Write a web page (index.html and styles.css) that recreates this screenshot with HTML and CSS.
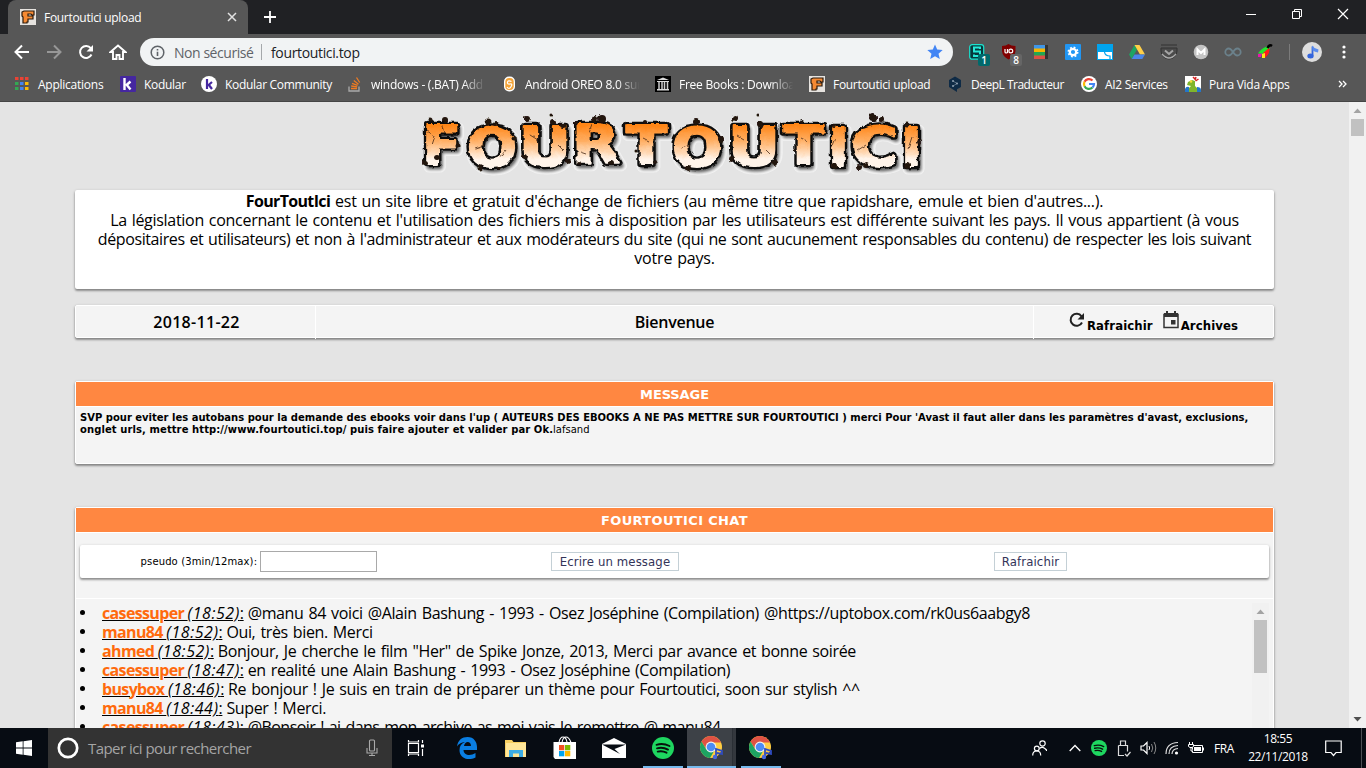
FILE: index.html
```html
<!DOCTYPE html>
<html lang="fr">
<head>
<meta charset="utf-8">
<title>Fourtoutici upload</title>
<link rel="stylesheet" href="styles.css">
</head>
<body>
<svg class="defs" width="0" height="0">
  <defs>
    <symbol id="fav" viewBox="0 0 16 16"><rect width="16" height="16" fill="#e6e3df"/><path d="M2 3l2-1h10v4h-2l-1-1H8v2h5v3H8v3H7v1H3V8L2 7z" fill="#f58a33" stroke="#2b1a0d" stroke-width="1.2"/></symbol>
    <symbol id="spotify" viewBox="0 0 22 22"><circle cx="11" cy="11" r="11" fill="#1ed760"/><path d="M4.500 7.800c4.500-1.300 9-.8 13 1.200M5 11.300c4-1 7.500-.6 11 1.300M5.700 14.600c3.200-.7 6-.4 8.800 1.100" fill="none" stroke="#07120b" stroke-width="1.900" stroke-linecap="round"/></symbol>
    <symbol id="chrome" viewBox="0 0 24 24"><circle cx="11" cy="11" r="11" fill="#ffcd41"/><path d="M1.500 5.500A11 11 0 0 1 20.500 5.500L21 6.500H11L6.500 13.500z" fill="#df5244"/><path d="M1.500 5.500A11 11 0 0 0 10 22l5-8.500L11 15l-5-2z" fill="#1da462"/><circle cx="11" cy="11" r="5.400" fill="#f2f2f2"/><circle cx="11" cy="11" r="4.300" fill="#4c8bf5"/><path d="M16 21v-8l6 2v3l-5-1" fill="none" stroke="#2f4cc0" stroke-width="1.800"/><circle cx="15" cy="21" r="2.200" fill="#4668dc"/></symbol>
  </defs>
</svg>
<div class="window">
  <div class="tabstrip">
    <div class="tab"><svg width="16" height="16"><use href="#fav"/></svg><span class="tab-title">Fourtoutici upload</span>
      <svg class="tab-close" width="10" height="10"><path d="M1 1l8 8M9 1L1 9" stroke="#e2e2e2" stroke-width="1.500"/></svg></div>
    <svg class="new-tab" width="12" height="12"><path d="M6 0v12M0 6h12" stroke="#fff" stroke-width="1.800"/></svg>
    <div class="controls">
      <svg width="12" height="12"><path d="M1 6.500h10" stroke="#fff"/></svg>
      <svg width="12" height="12"><path d="M1.500 3.500h7v7h-7zM3.500 3.500v-2h7v7h-2" fill="none" stroke="#fff"/></svg>
      <svg width="12" height="12"><path d="M1 1l10 10M11 1L1 11" stroke="#fff" stroke-width="1.200"/></svg>
    </div>
  </div>
  <div class="toolbar">
    <div class="nav">
      <svg width="16" height="16"><path d="M15 8H2M8 1.500L1.500 8 8 14.500" fill="none" stroke="#fff" stroke-width="2"/></svg>
      <svg width="16" height="16"><path d="M1 8h13M8 1.500L14.500 8 8 14.500" fill="none" stroke="#979797" stroke-width="2"/></svg>
      <svg width="16" height="16"><path d="M13.500 10.500A6 6 0 1 1 12.800 4.200" fill="none" stroke="#fff" stroke-width="2"/><path d="M15 1v6.500H8.500z" fill="#fff"/></svg>
      <svg width="18" height="16"><path d="M4 8v7h3.500v-4h3v4H14V8h2.500L9 1.500 1.500 8z" fill="none" stroke="#fff" stroke-width="1.900"/></svg>
    </div>
    <div class="omnibox">
      <svg width="15" height="15"><circle cx="7.500" cy="7.500" r="6.300" fill="none" stroke="#5f6368" stroke-width="1.500"/><path d="M7.500 6.700v4.200M7.500 4v1.600" stroke="#5f6368" stroke-width="1.600"/></svg>
      <span class="unsafe">Non sécurisé</span><span class="bar"></span><span class="url">fourtoutici.top</span>
      <svg class="star" width="16" height="16"><path d="M8 .5l2.200 5.100 5.500.5-4.200 3.600 1.300 5.400L8 12.200l-4.800 2.900 1.300-5.400L.3 6.100l5.500-.5z" fill="#4285f4"/></svg>
    </div>
    <div class="exts">
      <div class="ext"><svg width="16" height="16"><rect x=".7" y=".7" width="14" height="14.500" rx="2.500" fill="#07383c" stroke="#19e3cf" stroke-width="1.200"/><path d="M11 5V3.500H5V7.500h6V12H5v-1.500" fill="none" stroke="#25ead9" stroke-width="2"/></svg><b class="count teal">1</b></div>
      <div class="ext"><svg width="16" height="16"><path d="M1 2q4 0 6.500-2Q10 2 14.500 2v5q-.5 5.500-7 8.500Q1.500 12.500 1 7z" fill="#800000"/><path d="M4 5v3q0 1 1.200 1T6.500 8V5v4" fill="none" stroke="#fff" stroke-width="1.200"/><circle cx="9.800" cy="7" r="1.900" fill="none" stroke="#fff" stroke-width="1.200"/></svg><b class="count grey">8</b></div>
      <svg width="16" height="16"><path d="M11 1h4v14h-4z" fill="#333"/><path d="M1 1h11v4H1z" fill="#3e96e8"/><path d="M1 4.500h11v4H1z" fill="#f6b400"/><path d="M1 8h11v4H1z" fill="#22a852"/><path d="M1 11.500h11v3.500H1z" fill="#dc5145"/></svg>
      <svg width="16" height="16"><rect width="16" height="16" rx="1" fill="#2196f3"/><circle cx="8" cy="8" r="3.200" fill="none" stroke="#fff" stroke-width="2.200"/><circle cx="8" cy="8" r="4.700" fill="none" stroke="#fff" stroke-width="1.600" stroke-dasharray="1.850 1.850"/></svg>
      <svg width="16" height="16"><rect width="16" height="16" fill="#00a4ef"/><path d="M1 8h14v7H1z" fill="#fff"/><path d="M7.500 8q.5 4 5.500 4v3" fill="none" stroke="#00a4ef" stroke-width="1.200"/></svg>
      <svg width="16" height="16"><path d="M5.500 1L0 10.500 2.700 15 8 5.500z" fill="#1da462"/><path d="M5.500 1h5L16 10.500h-5z" fill="#ffcf48"/><path d="M5.500 10.500H16L13.300 15H2.700z" fill="#4b86e8"/></svg>
      <svg width="18" height="16"><path d="M1 1h16M1 4h16v3a8 8 0 0 1-16 0z" fill="#4b4b4b" stroke="#333"/><path d="M2 10q7 8 14 0" stroke="#aaa" fill="none" stroke-width="1.500"/><path d="M5 6.500L9 10l4-3.500" stroke="#a5a5a5" fill="none" stroke-width="2"/></svg>
      <svg width="16" height="16"><circle cx="8" cy="8" r="7.300" fill="#c4c4c4"/><path d="M4.500 11V5.500L8 9l3.500-3.500V11" fill="none" stroke="#fff" stroke-width="2"/></svg>
      <svg width="18" height="16"><path d="M9 8C7 5 6 4.500 4.800 4.500a3.500 3.500 0 0 0 0 7C6 11.500 7 11 9 8s3-3.500 4.200-3.500a3.500 3.500 0 0 1 0 7C12 11.500 11 11 9 8z" fill="none" stroke="#6b818b" stroke-width="1.800"/></svg>
      <svg width="16" height="16"><path d="M2 8q4-5 10-6l1 2-6 6-6-.5z" fill="#20e52d"/><path d="M6 9l6-5q2 4-4 10z" fill="#ff1b1b"/><path d="M1 10l4-.5L4 13H1z" fill="#e815b0"/><path d="M5 10l3-1v5H5z" fill="#ffe617"/><path d="M10.500 4q2-4 4.500-2" stroke="#000" stroke-width="2.500" fill="none"/></svg>
    </div>
    <span class="tool-sep"></span>
    <svg class="avatar" width="20" height="20"><circle cx="10" cy="10" r="10" fill="#dedede"/><path d="M10.500 4.500v9" stroke="#3465dc" stroke-width="1.800"/><path d="M10 3.500q2 3 6.500 4l-.5 3q-3-.5-5.500-2z" fill="#5b8dee"/><ellipse cx="8.500" cy="14" rx="3.200" ry="2.500" fill="#3465dc"/></svg>
    <svg class="dots" width="4" height="16"><circle cx="2" cy="3" r="1.600" fill="#fff"/><circle cx="2" cy="8" r="1.600" fill="#fff"/><circle cx="2" cy="13" r="1.600" fill="#fff"/></svg>
  </div>
  <div class="bookmarks">
    <div class="bm apps"><svg width="14" height="14"><path d="M0 1.500h14" stroke="#ea4335" stroke-width="3" stroke-dasharray="3.500 1.500"/><path d="M0 6.500h3.500M0 11.500h3.500" stroke="#34a853" stroke-width="3"/><path d="M5 6.500h3.500M5 11.500h3.500" stroke="#4285f4" stroke-width="3"/><path d="M10 6.500h3.500M10 11.500h3.500" stroke="#fbbc05" stroke-width="3"/></svg><span>Applications</span></div>
    <div class="bm"><svg width="16" height="16"><rect width="16" height="16" rx="1" fill="#4527a0"/><path d="M4.500 2v12M10.500 5.500L6 9.500M6.500 8.500l4 5" stroke="#fff" stroke-width="2.400"/></svg><span>Kodular</span></div>
    <div class="bm"><svg width="16" height="16"><circle cx="8" cy="8" r="8" fill="#fff"/><path d="M6 3v10M11 6L7 9.500M7.500 8.500l3.500 4.500" stroke="#4527a0" stroke-width="2.200"/></svg><span>Kodular Community</span></div>
    <div class="bm"><svg width="16" height="16"><path d="M2 10.500v4.500h10v-4.500" fill="none" stroke="#aaa" stroke-width="1.300"/><path d="M4 12.500h6M4.200 10l6 .8M5 7.300l5.600 2M6.800 4.500l4.700 3.700M9.500 1.500l3.200 5" stroke="#ef7b22" stroke-width="1.300"/></svg><span class="fade">windows - (.BAT) Add</span></div>
    <div class="bm"><svg width="16" height="16"><rect x="3" y=".5" width="11" height="15" rx="5" fill="#fff"/><rect x="4.300" y="2" width="8.400" height="12" rx="3.800" fill="#f4a438"/><path d="M10.500 5.500Q7 4 6.500 6.200T9 8t1 2.800-4 .2" stroke="#fff" stroke-width="1.200" fill="none"/></svg><span class="fade">Android OREO 8.0 sur</span></div>
    <div class="bm"><svg width="16" height="16"><rect width="16" height="16" fill="#000"/><path d="M2 4l6-2.500L14 4zM2 5h12v1H2zM2 13h12v1.500H2z" fill="#ddd"/><path d="M4 6v7M7 6v7M9.500 6v7M12.500 6v7" stroke="#ccc" stroke-width="1.500"/></svg><span class="fade">Free Books : Downloa</span></div>
    <div class="bm"><svg width="16" height="16"><use href="#fav"/></svg><span>Fourtoutici upload</span></div>
    <div class="bm"><svg width="16" height="16"><path d="M8 .5l6 3.500v7l-4 2.300V16l-4-2.500L2 11V4z" fill="#0f2b46"/><path d="M6 5l4 2.500L6 10" stroke="#5b7084" fill="none"/><circle cx="6" cy="5" r="1" fill="#8fa0b0"/><circle cx="10" cy="7.500" r="1" fill="#8fa0b0"/><circle cx="6" cy="10" r="1" fill="#8fa0b0"/></svg><span class="deepl">DeepL Traducteur</span></div>
    <div class="bm"><svg width="16" height="16"><circle cx="8" cy="8" r="8" fill="#fff"/><g fill="none" stroke-width="2.200"><path d="M11.500 4.500A5 5 0 0 0 3.500 5.800" stroke="#ea4335"/><path d="M3.500 5.800a5 5 0 0 0 0 4.400" stroke="#fbbc05"/><path d="M3.500 10.200a5 5 0 0 0 8 1.300" stroke="#34a853"/><path d="M11.500 11.500Q13 10 13 8H8" stroke="#4285f4"/></g></svg><span>AI2 Services</span></div>
    <div class="bm"><svg width="16" height="16"><rect width="16" height="16" fill="#fff"/><path d="M3 6l4-2 3 1v5l2 2v4H4v-4l2-2-4-1z" fill="#7fb52c"/><path d="M8 1l2 2M11 1l-1 3M13.500 3l-3 2" stroke="#d32222" stroke-width="1.500"/><path d="M0 13q1-3 4-2v5H0zM12 11q4 0 4 3v2h-4z" fill="#2476c8"/><circle cx="6" cy="5.500" r="1.300" fill="#f8dc37"/></svg><span>Pura Vida Apps</span></div>
    <svg class="more" width="9" height="8"><path d="M1 1l3 3-3 3M5 1l3 3-3 3" fill="none" stroke="#fff" stroke-width="1.300"/></svg>
  </div>
  <div class="viewport">
    <main class="page">
      <svg class="logo" width="520" height="80" viewBox="413 105 520 80">
        <defs>
          <linearGradient id="fire" gradientUnits="userSpaceOnUse" x1="0" y1="121" x2="0" y2="166"><stop offset=".1" stop-color="#ff8618"/><stop offset=".45" stop-color="#ffb066"/><stop offset=".85" stop-color="#fff4ea"/></linearGradient>
          <filter id="rough" x="-5%" y="-20%" width="110%" height="140%"><feTurbulence type="fractalNoise" baseFrequency=".16" numOctaves="2" seed="4" result="n"/><feDisplacementMap in="SourceGraphic" in2="n" scale="4" xChannelSelector="R" yChannelSelector="G"/></filter>
          <filter id="soft" x="-5%" y="-20%" width="110%" height="140%"><feGaussianBlur stdDeviation="1.500"/></filter>
          <g id="word" class="logo-text">
            <text x="422" y="164" textLength="39" lengthAdjust="spacingAndGlyphs">F</text><text x="467" y="166" textLength="50" lengthAdjust="spacingAndGlyphs">O</text><text x="519" y="165" textLength="52" lengthAdjust="spacingAndGlyphs">U</text><text x="572" y="163" textLength="48" lengthAdjust="spacingAndGlyphs">R</text><text x="626" y="164" textLength="41" lengthAdjust="spacingAndGlyphs">T</text><text x="672" y="166" textLength="50" lengthAdjust="spacingAndGlyphs">O</text><text x="728" y="165" textLength="52" lengthAdjust="spacingAndGlyphs">U</text><text x="783" y="164" textLength="41" lengthAdjust="spacingAndGlyphs">T</text><text x="828" y="166" textLength="21" lengthAdjust="spacingAndGlyphs">I</text><text x="851" y="165" textLength="47" lengthAdjust="spacingAndGlyphs">C</text><text x="901" y="166" textLength="21" lengthAdjust="spacingAndGlyphs">I</text>
          </g>
        </defs>
        <g transform="translate(2 3)" stroke="#f4f4f4" fill="#f4f4f4" stroke-width="11" aria-hidden="true"><use href="#word"/></g>
        <g transform="translate(2 3)" stroke="#666" fill="#666" stroke-width="5" filter="url(#soft)" aria-hidden="true"><use href="#word"/></g>
        <g filter="url(#rough)">
          <g stroke="#0c0c0c" fill="#0c0c0c" stroke-width="6.500" aria-hidden="true"><use href="#word"/></g>
          <g stroke="url(#fire)" fill="url(#fire)" stroke-width="2"><use href="#word"/></g>
          <g fill="#21130a"><circle cx="430" cy="120" r="2.500"/><circle cx="445" cy="120" r="3"/><circle cx="425" cy="163" r="3"/><circle cx="437" cy="158" r="3"/><circle cx="458" cy="146" r="2.500"/><circle cx="488" cy="122" r="3.500"/><circle cx="495" cy="124" r="2"/><circle cx="514" cy="139" r="2.500"/><circle cx="480" cy="168" r="2.500"/><circle cx="499" cy="168" r="2"/><circle cx="527" cy="119" r="3"/><circle cx="551" cy="115" r="1.500"/><circle cx="553" cy="122" r="3"/><circle cx="563" cy="126" r="3"/><circle cx="568" cy="161" r="3"/><circle cx="524" cy="157" r="3"/><circle cx="595" cy="119" r="3"/><circle cx="602" cy="119" r="4"/><circle cx="576" cy="123" r="2"/><circle cx="611" cy="163" r="3"/><circle cx="579" cy="163" r="2"/><circle cx="645" cy="122" r="2"/><circle cx="636" cy="151" r="1.500"/><circle cx="655" cy="162" r="2"/><circle cx="696" cy="122" r="3"/><circle cx="721" cy="139" r="3"/><circle cx="688" cy="168" r="3"/><circle cx="735" cy="118" r="3"/><circle cx="758" cy="115" r="1.500"/><circle cx="760" cy="124" r="3"/><circle cx="775" cy="163" r="3"/><circle cx="732" cy="159" r="3"/><circle cx="802" cy="122" r="2"/><circle cx="794" cy="151" r="1.500"/><circle cx="834" cy="126" r="2"/><circle cx="835" cy="166" r="3"/><circle cx="873" cy="118" r="4"/><circle cx="882" cy="119" r="3"/><circle cx="859" cy="167" r="3"/><circle cx="866" cy="165" r="3"/><circle cx="907" cy="125" r="2.500"/><circle cx="919" cy="142" r="2"/><circle cx="907" cy="166" r="3"/></g>
          <g fill="none" stroke="#4a2b16" stroke-width=".8"><path d="M427 131l8 5-3 9M443 125l2 9M475 148l9-3M500 158l6-8M530 135l8 5M558 145l5 5M592 125l-3 8M580 152l6 2M643 138l6 3M682 148l8-3M737 136l7 4M765 149l5 5M801 138l6 3M836 138l-4 10M858 150l8-5M912 137l-4 12"/></g>
        </g>
      </svg>
      <section class="card intro">
        <p class="l1"><b>FourToutIci</b> est un site libre et gratuit d'échange de fichiers (au même titre que rapidshare, emule et bien d'autres...).</p>
        <p class="l2">La législation concernant le contenu et l'utilisation des fichiers mis à disposition par les utilisateurs est différente suivant les pays. Il vous appartient (à vous</p>
        <p class="l3">dépositaires et utilisateurs) et non à l'administrateur et aux modérateurs du site (qui ne sont aucunement responsables du contenu) de respecter les lois suivant</p>
        <p class="l4">votre pays.</p>
      </section>
      <section class="card info">
        <div class="today">2018-11-22</div><div>Bienvenue</div>
        <div class="links">
          <svg width="16" height="16"><path d="M13 10.500A6 6 0 1 1 12.500 4.300" fill="none" stroke="#222" stroke-width="2"/><path d="M15 1v6.500H8.500z" fill="#222"/></svg><a>Rafraichir</a>
          <svg class="cal" width="16" height="18"><path d="M1 3.500h14v13H1z" fill="none" stroke="#333" stroke-width="1.500"/><path d="M1 2h14v4H1zM3 0h2v3H3zM11 0h2v3h-2zM8 9h4.500v4.500H8z" fill="#333"/></svg><a>Archives</a>
        </div>
      </section>
      <section class="card message">
        <h2>MESSAGE</h2>
        <div class="message-text"><p><b>SVP pour eviter les autobans pour la demande des ebooks voir dans l'up ( AUTEURS DES EBOOKS A NE PAS METTRE SUR FOURTOUTICI ) merci Pour 'Avast il faut aller dans les paramètres d'avast, exclusions,</b></p><p><b class="m2">onglet urls, mettre http://www.fourtoutici.top/ puis faire ajouter et valider par Ok.</b>lafsand</p></div>
      </section>
      <section class="card chat">
        <h2>FOURTOUTICI CHAT</h2>
        <div class="form-wrap"><form class="card form">
          <label>pseudo (3min/12max): <input type="text"></label>
          <div><button type="button" class="write">Ecrire un message</button></div>
          <div><button type="button" class="refresh">Rafraichir</button></div>
        </form></div>
        <div class="log">
          <ul>
            <li><u><b>casessuper </b><i>(18:52)</i>:</u> <span>@manu 84 voici @Alain Bashung - 1993 - Osez Joséphine (Compilation) @https://uptobox.com/rk0us6aabgy8</span></li>
            <li><u><b>manu84 </b><i>(18:52)</i>:</u> <span>Oui, très bien. Merci</span></li>
            <li><u><b>ahmed </b><i>(18:52)</i>:</u> <span>Bonjour, Je cherche le film "Her" de Spike Jonze, 2013, Merci par avance et bonne soirée</span></li>
            <li><u><b>casessuper </b><i>(18:47)</i>:</u> <span>en realité une Alain Bashung - 1993 - Osez Joséphine (Compilation)</span></li>
            <li><u><b>busybox </b><i>(18:46)</i>:</u> <span>Re bonjour ! Je suis en train de préparer un thème pour Fourtoutici, soon sur stylish ^^</span></li>
            <li><u><b>manu84 </b><i>(18:44)</i>:</u> <span>Super ! Merci.</span></li>
            <li class="last"><u><b>casessuper </b><i>(18:43)</i>:</u> <span>@Bonsoir ! ai dans mon archive as moi vais le remettre @ manu84</span></li>
          </ul>
          <div class="log-scroll"><svg width="17" height="17"><path d="M4.500 11l4-4.500 4 4.500z" fill="#a3a3a3"/></svg><i class="thumb"></i></div>
        </div>
      </section>
    </main>
    <div class="page-scroll"><svg width="17" height="17"><path d="M4.500 11l4-4.500 4 4.500z" fill="#a3a3a3"/></svg><i class="thumb"></i><svg class="down" width="17" height="17"><path d="M4.500 6l4 4.500 4-4.500z" fill="#505050"/></svg></div>
  </div>
</div>
<footer class="taskbar">
  <div class="start"><svg width="16" height="16"><path d="M0 2.300l6.700-1V7.600H0zM7.500 1.200L16 0v7.600H7.500zM0 8.400h6.700v6.300L0 13.700zM7.500 8.400H16V16l-8.500-1.200z" fill="#fff"/></svg></div>
  <div class="search"><svg width="22" height="22"><circle cx="11" cy="11" r="9.200" fill="none" stroke="#fff" stroke-width="2.700"/></svg><span>Taper ici pour rechercher</span>
    <svg class="mic" width="12" height="18"><rect x="3.500" y="1" width="5" height="11" rx="1" fill="none" stroke="#aaa" stroke-width="1.100"/><path d="M1 9v5h10V9M6 14v3M3 16.500h6" fill="none" stroke="#aaa" stroke-width="1.100"/></svg></div>
  <div class="task view"><svg width="18" height="16"><path d="M1.500 3.500h10v9h-10zM1.500 0v2h10V0M1.500 16v-2h10v2M15.500 0v3M15.500 9v7" fill="none" stroke="#fff" stroke-width="1.200"/><path d="M14 4.500h3v3h-3z" fill="#fff"/></svg></div>
  <div class="task"><svg width="20" height="22"><path d="M0 9.500C1 3 5 0 10.500 0 17 0 20 5 20 10v3H6.500c.3 6 7.500 6 12 3v4.500C12 24 2.500 22 2.500 13c0-4 2-6.500 5.500-8-5 .5-7 3-8 4.500zM7 9h7c0-5-6-5.500-7 0z" fill="#0a7ee2"/></svg></div>
  <div class="task"><svg width="22" height="19"><path d="M0 1h7l1.500 2H21v15H0z" fill="#f7cf61"/><path d="M1 4h20v14H1z" fill="#ffe698"/><path d="M4 18v-7h14v7h-4v-3.500H8V18z" fill="#3dade5"/></svg></div>
  <div class="task"><svg width="24" height="24"><path d="M6 6.500Q7 1 10 1t4 5M9 6.500Q10 1 13 1t5 5.500" fill="none" stroke="#fff" stroke-width="1.100"/><path d="M.5 6H23v17H2L.5 21z" fill="#fff"/><path d="M6 9h5.300v5.300H6z" fill="#f25022"/><path d="M12 9h5.300v5.300H12z" fill="#7fba00"/><path d="M6 15h5.300v5.300H6z" fill="#00a4ef"/><path d="M12 15h5.300v5.300H12z" fill="#ffb900"/></svg></div>
  <div class="task"><svg width="24" height="20"><path d="M0 6L12 0l12 6v14H0z" fill="#fff"/><path d="M0 6.500h24L12.500 11 18 16z" fill="#070c13"/></svg></div>
  <div class="task open"><svg width="22" height="22"><use href="#spotify"/></svg></div>
  <div class="task open active"><svg width="24" height="24"><use href="#chrome"/></svg></div>
  <div class="task open"><svg width="24" height="24"><use href="#chrome"/></svg></div>
  <div class="tray">
    <div><svg width="15" height="16"><g fill="none" stroke="#fff" stroke-width="1.200"><circle cx="10.500" cy="3.500" r="2.700"/><path d="M7.500 8.500q3-3 7 1.500v1"/><circle cx="4.800" cy="8.500" r="2.400"/><path d="M.7 15.500q0-4.500 4-4.500t4 4.500"/></g></svg></div>
    <div><svg width="12" height="8"><path d="M.7 7L6 1.500 11.300 7" fill="none" stroke="#fff" stroke-width="1.300"/></svg></div>
    <div><svg width="16" height="16"><use href="#spotify"/></svg></div>
    <div><svg width="14" height="17"><path d="M3.500 5V1h5v4M1.500 5.500h9v6M1.500 5.500v10H7M8 14l2 2 3.500-4" fill="none" stroke="#ddd" stroke-width="1.200"/></svg></div>
    <div><svg width="17" height="14"><path d="M1 5h2.500L7 1.500v11L3.500 9H1z" fill="none" stroke="#fff" stroke-width="1.200"/><path d="M9 5q1.300 2 0 4" fill="none" stroke="#fff"/><path d="M11.500 3q2.500 4 0 8M14 1q3.500 6 0 12" fill="none" stroke="#888"/></svg></div>
    <div><svg width="14" height="14"><g fill="none" stroke="#ddd" stroke-width="1.200"><path d="M1 13Q1 2 13 1.500"/><path d="M4 13Q4 5 13 4.500"/><path d="M7 13Q7 8 13 7.500"/></g><circle cx="11.500" cy="12" r="1.600" fill="#fff"/></svg></div>
    <div><svg width="17" height="12"><path d="M4.500 3.500h10v7h-10zM15.500 5.500v3" fill="none" stroke="#fff"/><path d="M6 5h7v4H6z" fill="#fff"/><path d="M.5 2.500h5v2l-1.500 1h-2l-1.500-1zM1.500 0v2M4.500 0v2M3 5v4h2" fill="#070c13" stroke="#fff"/></svg></div>
    <div class="lang">FRA</div>
    <div class="clock"><span class="time">18:55</span><span class="date">22/11/2018</span></div>
    <div><svg width="17" height="17"><path d="M.7 1h15.500v11.500H11L8.500 15.500 6 12.500H.7z" fill="none" stroke="#fff" stroke-width="1.200"/></svg></div>
  </div>
</footer>
</body>
</html>
```

FILE: styles.css
```css
* { box-sizing: border-box; }
body { margin: 0; width: 1366px; height: 768px; overflow: hidden; display: flex; flex-direction: column; font-family: "Open Sans", "Noto Sans", sans-serif; color: #000; }
svg { display: block; flex: none; }
p, h2, ul { margin: 0; padding: 0; }
.defs { position: absolute; }
.window { height: 728px; display: flex; flex-direction: column; }

.tabstrip { height: 34px; background: #202124; display: flex; align-items: center; }
.tab { margin-left: 8px; width: 240px; height: 34px; background: #575757; border-radius: 8px 8px 0 0; display: flex; align-items: center; padding: 0 11px 0 12px; }
.tab-title { margin-left: 8px; font-size: 12px; letter-spacing: -.3px; color: #fff; }
.tab-close { margin-left: auto; }
.new-tab { margin-left: 16px; }
.controls { margin-left: auto; display: flex; gap: 34px; padding: 0 17px 6px 0; }

.toolbar { height: 36px; background: #575757; display: flex; align-items: center; }
.nav { display: grid; grid-template-columns: repeat(4, 32px); justify-items: center; align-items: center; margin-left: 6px; }
.omnibox { margin-left: 6px; width: 813px; height: 28px; border-radius: 14px; background: #f1f3f4; display: flex; align-items: center; padding: 0 10px; font-size: 14px; white-space: nowrap; }
.unsafe { margin-left: 9px; width: 80px; color: #5f6368; letter-spacing: -.45px; }
.bar { width: 1px; height: 16px; margin: 0 9px 0 7px; background: #a5a8ab; }
.url { color: #202124; letter-spacing: -.35px; }
.star { margin-left: auto; }
.exts { margin-left: 8px; display: grid; grid-template-columns: repeat(10, 32px); justify-items: center; align-items: center; }
.ext { position: relative; }
.count { position: absolute; left: 9px; top: 10px; width: 12px; height: 12px; border-radius: 2px; font-size: 10px; font-weight: 600; line-height: 12px; text-align: center; color: #fff; }
.teal { background: #00696b; }
.grey { background: #666; }
.tool-sep { width: 1px; height: 16px; margin-left: 8px; background: #7b7b7b; }
.avatar { margin-left: 12px; }
.dots { margin-left: 20px; }

.bookmarks { height: 32px; background: #575757; border-bottom: 1px solid #454545; display: grid; grid-template-columns: 105px 81px 146px 154px 154px 154px 138px 134px 104px 153px 9px; padding: 0 0 3px 15px; align-items: center; }
.bm { display: flex; align-items: center; gap: 8px; font-size: 12px; letter-spacing: -.3px; color: #fff; white-space: nowrap; }
.apps { gap: 9px; letter-spacing: -.25px; }
.deepl { letter-spacing: -.5px; }
.fade { width: 118px; letter-spacing: -.25px; overflow: hidden; -webkit-mask-image: linear-gradient(90deg, #000 78%, transparent 97%); mask-image: linear-gradient(90deg, #000 78%, transparent 97%); }

.viewport { height: 626px; display: flex; background: #e4e4e4; overflow: hidden; }
.page { width: 1349px; padding: 3px 75px 0; display: flex; flex-direction: column; }
.page > * { flex: none; }
.logo { margin-left: 338px; }
.logo-text { font: bold 54px "DejaVu Sans", sans-serif; stroke-linejoin: round; }
.card { border-radius: 2px; box-shadow: 0 1px 3px rgba(0,0,0,.3), 0 2px 2px rgba(0,0,0,.25); }
.intro { margin-top: 5px; height: 99px; background: #fff; padding-top: 2px; text-align: center; font-size: 16px; line-height: 19px; white-space: nowrap; word-spacing: 1px; }
.l1 { letter-spacing: -.24px; }
.l1 b { letter-spacing: -.65px; }
.l2 { letter-spacing: -.29px; }
.l3 { letter-spacing: -.4px; }
.l4 { letter-spacing: -.2px; }
.info { margin-top: 16px; height: 33px; background: #f4f4f4; border: 1px solid #fff; display: grid; grid-template-columns: 239px 718px 1fr; font-size: 16px; font-weight: 600; letter-spacing: -.25px; text-align: center; line-height: 32px; }
.today { letter-spacing: .3px; padding-left: 2px; }
.info > div + div { border-left: 1px solid #fff; }
.links { display: flex; padding: 6px 0 0 35px; font: bold 13px/27px "DejaVu Sans Condensed", "DejaVu Sans", sans-serif; letter-spacing: .1px; }
.links a { margin-left: 2px; }
.links .cal { margin: -1px 0 0 10px; }
.message { margin-top: 43px; height: 83px; background: #f4f4f4; border: 1px solid #fff; }
h2 { height: 25px; background: #ff8741; border-bottom: 1px solid #fff; color: #fff; text-align: center; font: bold 13px/25px "DejaVu Sans", sans-serif; letter-spacing: -.1px; }
.chat h2 { letter-spacing: .35px; }
.message-text { padding: 5px 4px; font: 10px/12px "DejaVu Sans", sans-serif; white-space: nowrap; }
.m2 { letter-spacing: .09px; }
.chat { margin-top: 43px; height: 300px; background: #f4f4f4; border: 1px solid #fff; }
.form-wrap { height: 66px; padding: 12px 4px 0; border-bottom: 1px solid #fff; }
.form { height: 33px; background: #fff; display: grid; grid-template-columns: 358px 354px 1fr; text-align: center; align-items: center; font: 10px "DejaVu Sans", sans-serif; }
.form label { letter-spacing: .13px; }
.form input { width: 117px; height: 21px; border: 1px solid #a9a9a9; vertical-align: middle; padding: 0; margin: 0; background: #fff; }
.form button { height: 19px; padding: 0; border: 1px solid #c4d0d6; background: #fff; color: #333358; font: 13px/16px "DejaVu Sans Condensed", "DejaVu Sans", sans-serif; letter-spacing: .12px; }
.write { width: 128px; }
.refresh { width: 73px; }
.log { display: flex; height: 200px; padding: 4px 4px 0 0; }
.log ul { flex: 1; padding-left: 4px; list-style: none; font-size: 16px; line-height: 20px; white-space: nowrap; letter-spacing: -.36px; }
.log li { display: flex; height: 19px; align-items: center; }
.log li::before { content: ""; width: 5px; height: 5px; border-radius: 50%; background: #000; margin-right: 17px; }
.log li u { white-space: pre; margin-right: 4px; }
.log li span { word-spacing: 1.200px; }
.log .last span { letter-spacing: -.53px; }
.log u b { color: #ff6a0d; letter-spacing: -.65px; }
.log u i { letter-spacing: .55px; }
.log-scroll { width: 17px; background: #f1f1f1; }
.thumb { display: block; width: 13px; margin-left: 2px; background: #c1c1c1; }
.log-scroll .thumb { height: 53px; }
.page-scroll { width: 17px; background: #f1f1f1; display: flex; flex-direction: column; }
.page-scroll .thumb { height: 17px; }
.down { margin-top: auto; }

.taskbar { height: 40px; background: #070c13; color: #fff; display: flex; }
.start { width: 48px; display: grid; place-items: center; }
.search { width: 344px; background: #333; display: flex; align-items: center; padding: 0 14px 0 9px; font-size: 15px; color: #a5a5a5; }
.search span { margin-left: 9px; letter-spacing: -.55px; }
.mic { margin-left: auto; }
.task { width: 49px; display: grid; place-items: center; }
.view { width: 50px; padding-right: 2px; }
.open { background: linear-gradient(#76b9ed, #76b9ed) 50% 100% / 40px 2px no-repeat; }
.active { background: linear-gradient(#76b9ed, #76b9ed) 50% 100% / 49px 2px no-repeat, linear-gradient(90deg, #3d4147 45px, #22272d 45px, #34383e 46px); }
.tray { margin-left: auto; width: 338px; margin-right: 4px; display: grid; grid-template-columns: 30px 33px 24px 25px 24px 24px 24px 32px 76px 34px; align-items: center; justify-items: center; border-right: 1px solid #4b4f54; }
.tray > div:nth-child(2) { padding-left: 9px; }
.lang, .clock { font-size: 12px; letter-spacing: -.4px; }
.clock { display: flex; flex-direction: column; align-items: center; line-height: 18px; }
```
